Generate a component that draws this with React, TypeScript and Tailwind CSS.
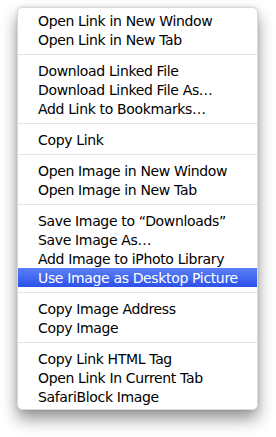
const groups: string[][] = [
  ["Open Link in New Window", "Open Link in New Tab"],
  ["Download Linked File", "Download Linked File As…", "Add Link to Bookmarks…"],
  ["Copy Link"],
  ["Open Image in New Window", "Open Image in New Tab"],
  [
    "Save Image to “Downloads”",
    "Save Image As…",
    "Add Image to iPhoto Library",
    "Use Image as Desktop Picture",
  ],
  ["Copy Image Address", "Copy Image"],
  ["Copy Link HTML Tag", "Open Link In Current Tab", "SafariBlock Image"],
];

const selected = "Use Image as Desktop Picture";

export default function App() {
  return (
    <div className="h-[437px] w-[276px] bg-white pl-[17px] pt-[7px]">
      <div className="w-[241px] rounded-[5px] border border-[#dadada] bg-white py-[3px] font-['DejaVu_Sans',sans-serif] text-[14px] tracking-[-0.35px] text-black shadow-[0_9px_16px_rgba(0,0,0,0.42),0_0_4px_rgba(0,0,0,0.12)]">
        {groups.map((group, i) => (
          <div key={i}>
            {i > 0 && (
              <div className="pb-[6px] pt-[5px]">
                <div className="h-px bg-[#e3e3e3]" />
              </div>
            )}
            {group.map((label) => (
              <MenuItem key={label} label={label} active={label === selected} />
            ))}
          </div>
        ))}
      </div>
    </div>
  );
}

function MenuItem({ label, active }: { label: string; active: boolean }) {
  return (
    <div
      className={
        active
          ? "flex h-[19px] items-center bg-gradient-to-b from-[#5c7ff5] to-[#2d51e9] pl-[20px] leading-none text-white"
          : "flex h-[19px] items-center pl-[20px] leading-none"
      }
    >
      {label}
    </div>
  );
}
